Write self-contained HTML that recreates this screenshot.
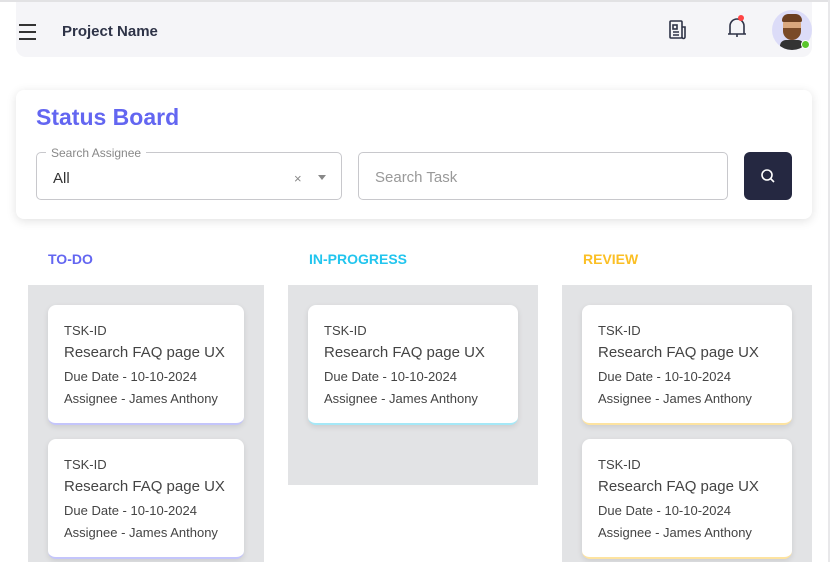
<!DOCTYPE html>
<html><head><style>
*{box-sizing:border-box;margin:0;padding:0}
body{width:830px;height:562px;overflow:hidden;background:#fff;font-family:"Liberation Sans",sans-serif;position:relative}
.abs{position:absolute}
.hdr{left:16px;top:2px;width:796px;height:55px;background:#f5f5f8;border-radius:0 0 10px 10px}
.card{left:16px;top:90px;width:796px;height:129px;background:#fff;border-radius:8px;box-shadow:0 2px 10px rgba(0,0,0,.12)}
.col{background:#e2e3e5}
.t{background:#fff;border-radius:8px;box-shadow:0 2px 6px rgba(0,0,0,.1);padding:18px 16px;color:#444;height:120px}
.t .a{font-size:13px}
.t .b{font-size:15px;margin-top:6px}
.t .c{font-size:13px;margin-top:8px}
.t .d{font-size:13px;margin-top:7px}
.lbl{font-weight:bold;font-size:14px}
</style></head><body>
<div class="abs" style="left:0;top:0;width:830px;height:2px;background:#e2e2e4"></div>
<div class="abs" style="left:828px;top:0;width:2px;height:562px;background:#e8e8ea"></div>
<div class="abs hdr"></div>
<div class="abs" style="left:19px;top:24px;width:17px;height:2px;background:#333;box-shadow:0 7px 0 #333,0 14px 0 #333"></div>
<div class="abs" style="left:62px;top:23px;font-size:15px;font-weight:bold;color:#2e3347">Project Name</div>
<svg class="abs" style="left:668px;top:20px" width="20" height="20" viewBox="0 0 20 20" fill="none" stroke="#2e3347" stroke-width="1.6"><rect x="2" y="1" width="12" height="17" rx="1"/><path d="M14 7h3v10a1.5 1.5 0 0 1-3 0"/><rect x="5" y="5" width="4" height="4"/><path d="M5 12h6M5 15h6"/></svg>
<svg class="abs" style="left:726px;top:15px" width="22" height="26" viewBox="0 0 22 26" fill="none" stroke="#2e3347" stroke-width="1.6"><path d="M4 19V11a7 7 0 0 1 14 0v8M2 19h18M11 19v3"/><circle cx="15" cy="3" r="3" fill="#f44" stroke="none"/></svg>
<div class="abs" style="left:772px;top:10px;width:40px;height:40px;border-radius:50%;background:#dcdcf8;overflow:hidden">
<div class="abs" style="left:11px;top:6px;width:18px;height:22px;border-radius:8px;background:#d9a77e"></div>
<div class="abs" style="left:10px;top:4px;width:20px;height:8px;border-radius:8px 8px 2px 2px;background:#6b3f22"></div>
<div class="abs" style="left:11px;top:18px;width:18px;height:12px;border-radius:0 0 9px 9px;background:#7a4a28"></div>
<div class="abs" style="left:8px;top:30px;width:24px;height:12px;border-radius:6px 6px 0 0;background:#333"></div>
</div>
<div class="abs" style="left:801px;top:40px;width:9px;height:9px;border-radius:50%;background:#5ac62c;border:1px solid #fff"></div>

<div class="abs card"></div>
<div class="abs" style="left:36px;top:104px;font-size:23px;font-weight:bold;color:#6366f1">Status Board</div>
<div class="abs" style="left:36px;top:152px;width:306px;height:48px;border:1px solid #c8c8cc;border-radius:5px"></div>
<div class="abs" style="left:46px;top:146px;padding:0 5px;background:#fff;font-size:12px;color:#888">Search Assignee</div>
<div class="abs" style="left:53px;top:170px;font-size:15px;color:#333">All</div>
<div class="abs" style="left:294px;top:171px;font-size:13px;color:#888">×</div>
<div class="abs" style="left:318px;top:175px;border:4px solid transparent;border-top:5px solid #888"></div>
<div class="abs" style="left:358px;top:152px;width:370px;height:48px;border:1px solid #c8c8cc;border-radius:5px"></div>
<div class="abs" style="left:375px;top:169px;font-size:15px;color:#999">Search Task</div>
<div class="abs" style="left:744px;top:152px;width:48px;height:48px;border-radius:6px;background:#252841"></div>
<svg class="abs" style="left:760px;top:168px" width="16" height="16" viewBox="0 0 16 16" fill="none" stroke="#fff" stroke-width="1.6"><circle cx="7" cy="7" r="5"/><path d="M11 11l3 3"/></svg>

<div class="abs lbl" style="left:48px;top:251px;color:#6366f1">TO-DO</div>
<div class="abs lbl" style="left:309px;top:251px;color:#22c5ee">IN-PROGRESS</div>
<div class="abs lbl" style="left:583px;top:251px;color:#fbbf24">REVIEW</div>

<div class="abs col" style="left:28px;top:285px;width:236px;height:277px"></div>
<div class="abs col" style="left:288px;top:285px;width:250px;height:200px"></div>
<div class="abs col" style="left:562px;top:285px;width:250px;height:277px"></div>

<div class="abs t" style="left:48px;top:305px;width:196px;border-bottom:2px solid #c4c5fb"><div class="a">TSK-ID</div><div class="b">Research FAQ page UX</div><div class="c">Due Date - 10-10-2024</div><div class="d">Assignee - James Anthony</div></div>
<div class="abs t" style="left:48px;top:439px;width:196px;border-bottom:2px solid #c4c5fb"><div class="a">TSK-ID</div><div class="b">Research FAQ page UX</div><div class="c">Due Date - 10-10-2024</div><div class="d">Assignee - James Anthony</div></div>
<div class="abs t" style="left:308px;top:305px;width:210px;border-bottom:2px solid #a5e8f7"><div class="a">TSK-ID</div><div class="b">Research FAQ page UX</div><div class="c">Due Date - 10-10-2024</div><div class="d">Assignee - James Anthony</div></div>
<div class="abs t" style="left:582px;top:305px;width:210px;border-bottom:2px solid #fde3a0"><div class="a">TSK-ID</div><div class="b">Research FAQ page UX</div><div class="c">Due Date - 10-10-2024</div><div class="d">Assignee - James Anthony</div></div>
<div class="abs t" style="left:582px;top:439px;width:210px;border-bottom:2px solid #fde3a0"><div class="a">TSK-ID</div><div class="b">Research FAQ page UX</div><div class="c">Due Date - 10-10-2024</div><div class="d">Assignee - James Anthony</div></div>
</body></html>
